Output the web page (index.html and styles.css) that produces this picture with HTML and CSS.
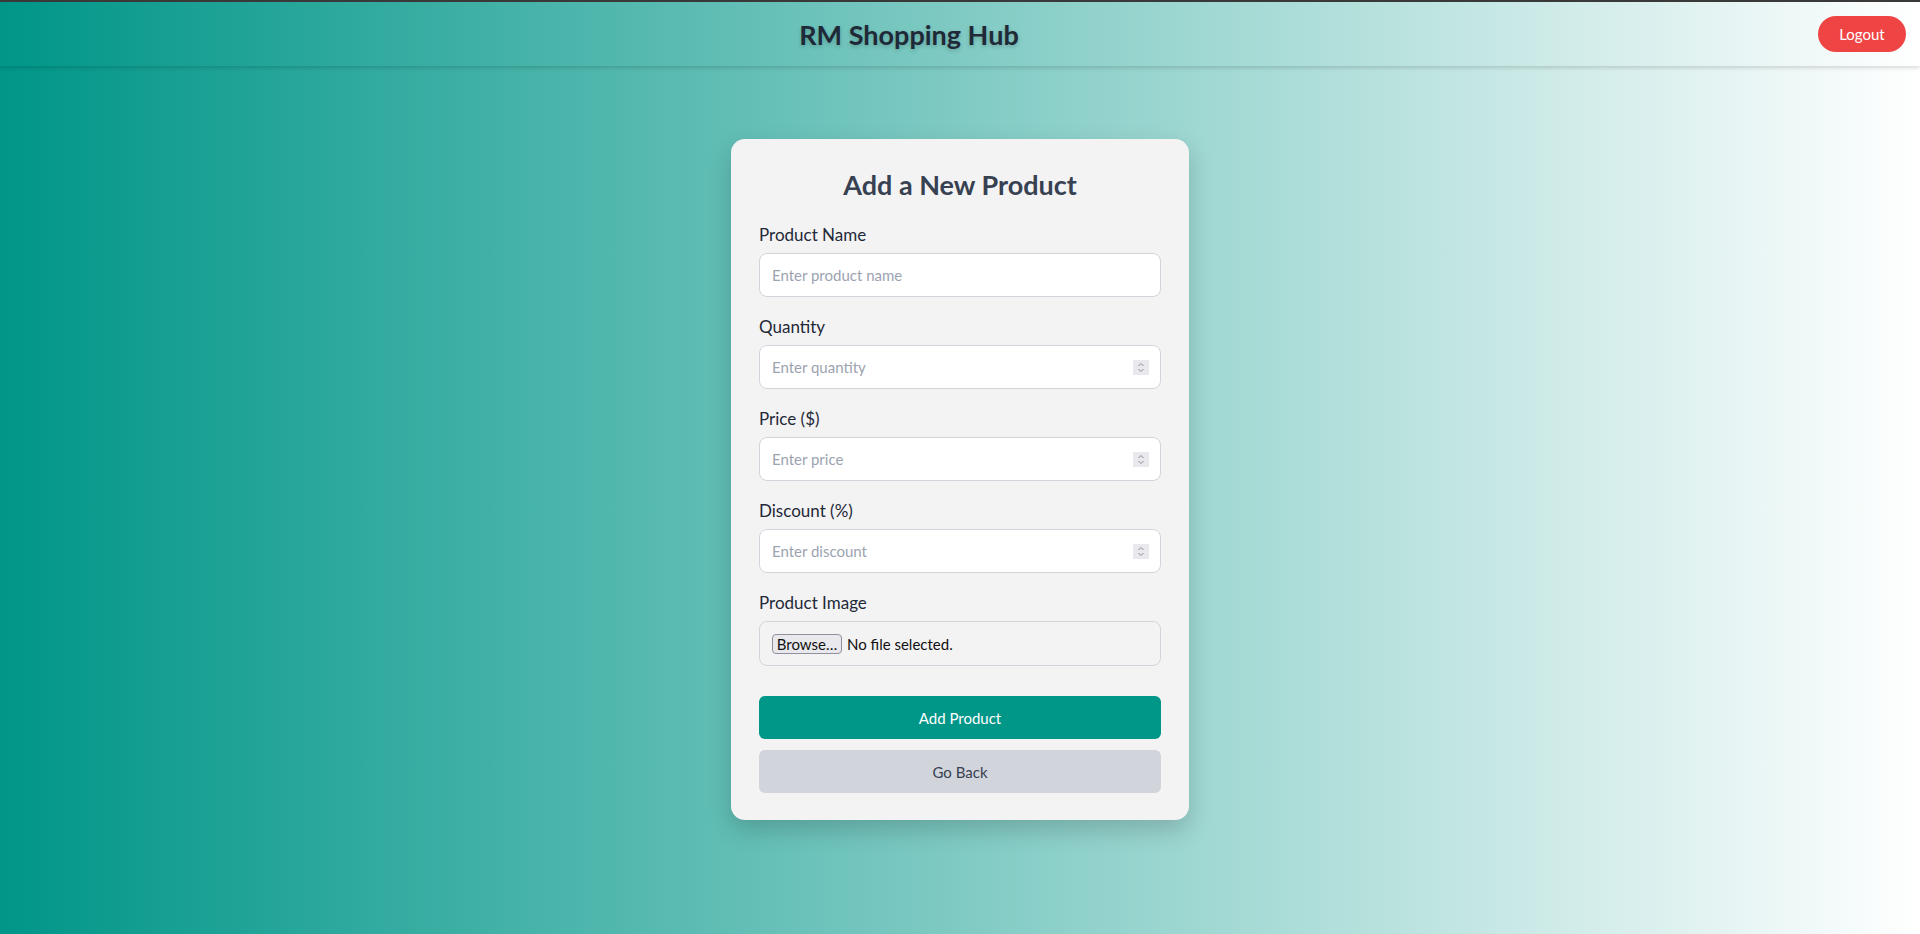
FILE: index.html
```html
<!DOCTYPE html>
<html lang="en">
<head>
<meta charset="utf-8">
<title>RM Shopping Hub</title>
<link rel="stylesheet" href="styles.css">
</head>
<body>
<div class="topline"></div>
<header class="header">
  <div class="spacer"></div>
  <h1 class="brand">RM Shopping Hub</h1>
  <button class="logout" type="button">Logout</button>
</header>
<main class="main">
  <form class="card">
    <h2 class="card-title">Add a New Product</h2>
    <div class="group">
      <label class="label" for="name">Product Name</label>
      <div class="field">
        <input class="input" id="name" type="text" placeholder="Enter product name">
      </div>
    </div>
    <div class="group">
      <label class="label" for="qty">Quantity</label>
      <div class="field">
        <input class="input" id="qty" type="number" placeholder="Enter quantity">
        <span class="spin"><svg width="8" height="11" viewBox="0 0 8 11"><path d="M1.5 4 L4 1.5 L6.5 4 M1.5 7 L4 9.5 L6.5 7" fill="none" stroke="#8a8a93" stroke-width="1"/></svg></span>
      </div>
    </div>
    <div class="group">
      <label class="label" for="price">Price ($)</label>
      <div class="field">
        <input class="input" id="price" type="number" placeholder="Enter price">
        <span class="spin"><svg width="8" height="11" viewBox="0 0 8 11"><path d="M1.5 4 L4 1.5 L6.5 4 M1.5 7 L4 9.5 L6.5 7" fill="none" stroke="#8a8a93" stroke-width="1"/></svg></span>
      </div>
    </div>
    <div class="group">
      <label class="label" for="disc">Discount (%)</label>
      <div class="field">
        <input class="input" id="disc" type="number" placeholder="Enter discount">
        <span class="spin"><svg width="8" height="11" viewBox="0 0 8 11"><path d="M1.5 4 L4 1.5 L6.5 4 M1.5 7 L4 9.5 L6.5 7" fill="none" stroke="#8a8a93" stroke-width="1"/></svg></span>
      </div>
    </div>
    <div class="group group-last">
      <span class="label">Product Image</span>
      <label class="filebox">
        <span class="browse">Browse…</span>
        <span class="nofile">No file selected.</span>
      </label>
    </div>
    <button class="btn btn-primary" type="button">Add Product</button>
    <button class="btn btn-secondary" type="button">Go Back</button>
  </form>
</main>
</body>
</html>
```

FILE: styles.css
```css
* { box-sizing: border-box; }
html, body { margin: 0; padding: 0; }
body {
  min-height: 934px;
  font-family: "Lato", "Noto Sans", sans-serif;
  background: linear-gradient(to right, #009688, #ffffff);
  color: #1f2937;
}
.topline { height: 2px; background: #3a3a3a; }
.header {
  height: 64px;
  display: flex;
  align-items: center;
  justify-content: space-between;
  padding: 0 14px 0 0;
  box-shadow: 0 2px 4px rgba(0,0,0,0.15);
  position: relative;
}
.spacer { width: 0; }
.brand {
  margin: 0;
  font-size: 27px;
  font-weight: 700;
  color: #1f2937;
  text-shadow: 0 2px 4px rgba(0,0,0,0.2);
}
.logout {
  width: 88px;
  height: 36px;
  border: none;
  border-radius: 18px;
  background: #ef4444;
  color: #fff;
  font-family: inherit;
  font-size: 15px;
}
.main {
  display: flex;
  justify-content: center;
  padding-top: 73px;
}
.card {
  width: 458px;
  background: #f3f3f4;
  border-radius: 14px;
  padding: 28px 28px 27px;
  box-shadow: 0 10px 25px rgba(0,0,0,0.18);
}
.card-title {
  margin: 0 0 20px;
  text-align: center;
  font-size: 27px;
  line-height: 36px;
  font-weight: 700;
  color: #374151;
}
.group { margin-bottom: 18px; }
.group-last { margin-bottom: 30px; }
.label {
  display: block;
  font-size: 17px;
  line-height: 24px;
  margin-bottom: 6px;
  color: #1f2937;
}
.field { position: relative; }
.input {
  display: block;
  width: 100%;
  height: 44px;
  border: 1px solid #d1d5db;
  border-radius: 8px;
  background: #fff;
  padding: 0 12px;
  font-family: inherit;
  font-size: 15px;
  color: #1f2937;
  outline: none;
  -moz-appearance: textfield;
}
.input::placeholder { color: #9ca3af; }
.input::-webkit-outer-spin-button,
.input::-webkit-inner-spin-button { -webkit-appearance: none; margin: 0; }
.spin {
  position: absolute;
  right: 12px;
  top: 15px;
  width: 16px;
  height: 15px;
  background: #e9e9ed;
  display: flex;
  align-items: center;
  justify-content: center;
}
.filebox {
  display: flex;
  align-items: center;
  height: 45px;
  border: 1px solid #d1d5db;
  border-radius: 8px;
  padding: 0 12px;
  background: #f3f3f4;
  font-size: 15px;
  color: #111;
}
.browse {
  height: 20px;
  width: 70px;
  display: flex;
  align-items: center;
  justify-content: center;
  border: 1px solid #8f8f9d;
  border-radius: 4px;
  background: #e9e9ed;
  margin-right: 5px;
}
.btn {
  display: block;
  width: 100%;
  height: 43px;
  border: none;
  border-radius: 6px;
  font-family: inherit;
  font-size: 15px;
}
.btn-primary { background: #009688; color: #fff; margin-bottom: 11px; }
.btn-secondary { background: #d1d5db; color: #374151; }
```
